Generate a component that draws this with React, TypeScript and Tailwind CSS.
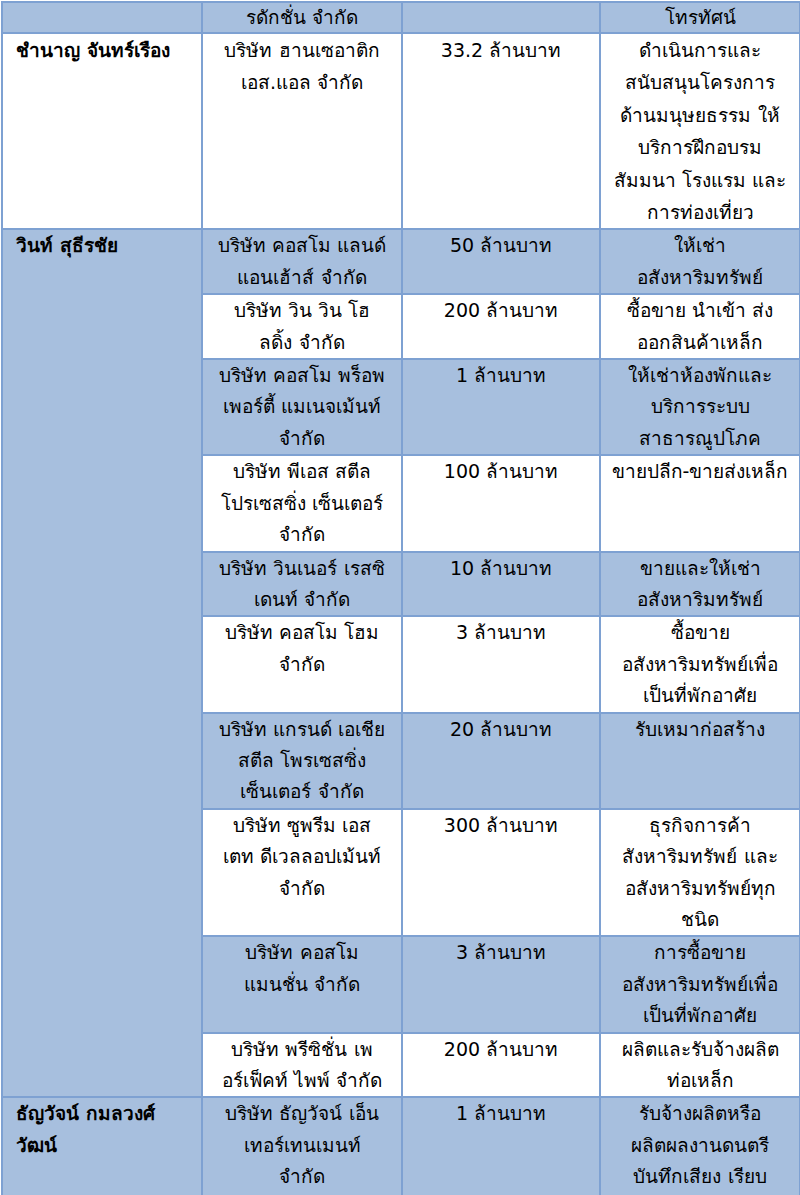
import React from 'react';

type Sub = {
  company: string[];
  capital: string;
  business: string[];
  tint: boolean;
};

type Group = {
  name: string[];
  tint: boolean;
  tall?: boolean;
  rows: Sub[];
};

// owners and their companies, as listed in the table
const groups: Group[] = [
  {
    name: ['ชำนาญ จันทร์เรือง'],
    tint: false,
    tall: true,
    rows: [
      {
        company: ['บริษัท ฮานเซอาติก', 'เอส.แอล จำกัด'],
        capital: '33.2 ล้านบาท',
        business: [
          'ดำเนินการและ',
          'สนับสนุนโครงการ',
          'ด้านมนุษยธรรม ให้',
          'บริการฝึกอบรม',
          'สัมมนา โรงแรม และ',
          'การท่องเที่ยว',
        ],
        tint: false,
      },
    ],
  },
  {
    name: ['วินท์ สุธีรชัย'],
    tint: true,
    rows: [
      { company: ['บริษัท คอสโม แลนด์', 'แอนเฮ้าส์ จำกัด'], capital: '50 ล้านบาท', business: ['ให้เช่า', 'อสังหาริมทรัพย์'], tint: true },
      { company: ['บริษัท วิน วิน โฮ', 'ลดิ้ง จำกัด'], capital: '200 ล้านบาท', business: ['ซื้อขาย นำเข้า ส่ง', 'ออกสินค้าเหล็ก'], tint: false },
      { company: ['บริษัท คอสโม พร็อพ', 'เพอร์ตี้ แมเนจเม้นท์', 'จำกัด'], capital: '1 ล้านบาท', business: ['ให้เช่าห้องพักและ', 'บริการระบบ', 'สาธารณูปโภค'], tint: true },
      { company: ['บริษัท พีเอส สตีล', 'โปรเซสซิ่ง เซ็นเตอร์', 'จำกัด'], capital: '100 ล้านบาท', business: ['ขายปลีก-ขายส่งเหล็ก'], tint: false },
      { company: ['บริษัท วินเนอร์ เรสซิ', 'เดนท์ จำกัด'], capital: '10 ล้านบาท', business: ['ขายและให้เช่า', 'อสังหาริมทรัพย์'], tint: true },
      { company: ['บริษัท คอสโม โฮม', 'จำกัด'], capital: '3 ล้านบาท', business: ['ซื้อขาย', 'อสังหาริมทรัพย์เพื่อ', 'เป็นที่พักอาศัย'], tint: false },
      { company: ['บริษัท แกรนด์ เอเชีย', 'สตีล โพรเซสซิ่ง', 'เซ็นเตอร์ จำกัด'], capital: '20 ล้านบาท', business: ['รับเหมาก่อสร้าง'], tint: true },
      { company: ['บริษัท ซูพรีม เอส', 'เตท ดีเวลลอปเม้นท์', 'จำกัด'], capital: '300 ล้านบาท', business: ['ธุรกิจการค้า', 'สังหาริมทรัพย์ และ', 'อสังหาริมทรัพย์ทุก', 'ชนิด'], tint: false },
      { company: ['บริษัท คอสโม', 'แมนชั่น จำกัด'], capital: '3 ล้านบาท', business: ['การซื้อขาย', 'อสังหาริมทรัพย์เพื่อ', 'เป็นที่พักอาศัย'], tint: true },
      { company: ['บริษัท พรีซิชั่น เพ', 'อร์เฟ็คท์ ไพพ์ จำกัด'], capital: '200 ล้านบาท', business: ['ผลิตและรับจ้างผลิต', 'ท่อเหล็ก'], tint: false },
    ],
  },
  {
    name: ['ธัญวัจน์ กมลวงศ์', 'วัฒน์'],
    tint: true,
    rows: [
      {
        company: ['บริษัท ธัญวัจน์ เอ็น', 'เทอร์เทนเมนท์', 'จำกัด'],
        capital: '1 ล้านบาท',
        business: ['รับจ้างผลิตหรือ', 'ผลิตผลงานดนตรี', 'บันทึกเสียง เรียบ', 'เรียงเสียงประสาน'],
        tint: true,
      },
    ],
  },
];

const Lines: React.FC<{ lines: string[] }> = ({ lines }) => (
  <>
    {lines.map((l, i) => (
      <div key={i} className="whitespace-nowrap">
        {l}
      </div>
    ))}
  </>
);

const cell = 'border-2 border-[#7ea1d2] align-top p-0';

export default function App() {
  return (
    <div className="h-[1195px] w-[800px] overflow-hidden bg-white">
      <table className="table-fixed border-collapse w-[798px] ml-[1px] mt-[1px] font-['DejaVu_Sans',sans-serif] text-[19px] leading-[31.4px] text-black">
        <colgroup>
          <col className="w-[200px]" />
          <col className="w-[200px]" />
          <col className="w-[198px]" />
          <col className="w-[200px]" />
        </colgroup>
        <tbody>
          <tr className="bg-[#a7bfde] leading-[29px]">
            <td className={cell}></td>
            <td className={`${cell} text-center`}>รดักชั่น จำกัด</td>
            <td className={cell}></td>
            <td className={`${cell} text-center`}>โทรทัศน์</td>
          </tr>
          {groups.map((g, gi) =>
            g.rows.map((r, ri) => {
              const bg = r.tint ? 'bg-[#a7bfde]' : 'bg-white';
              const lh = g.tall ? 'leading-[32.4px]' : '';
              return (
                <tr key={`${gi}-${ri}`} className={lh}>
                  {ri === 0 && (
                    <td
                      rowSpan={g.rows.length}
                      className={`${cell} pl-[13px] font-bold ${g.tint ? 'bg-[#a7bfde]' : 'bg-white'}`}
                    >
                      <Lines lines={g.name} />
                    </td>
                  )}
                  <td className={`${cell} text-center ${bg}`}>
                    <Lines lines={r.company} />
                  </td>
                  <td className={`${cell} text-center ${bg}`}>{r.capital}</td>
                  <td className={`${cell} text-center ${bg}`}>
                    <Lines lines={r.business} />
                  </td>
                </tr>
              );
            })
          )}
        </tbody>
      </table>
    </div>
  );
}
